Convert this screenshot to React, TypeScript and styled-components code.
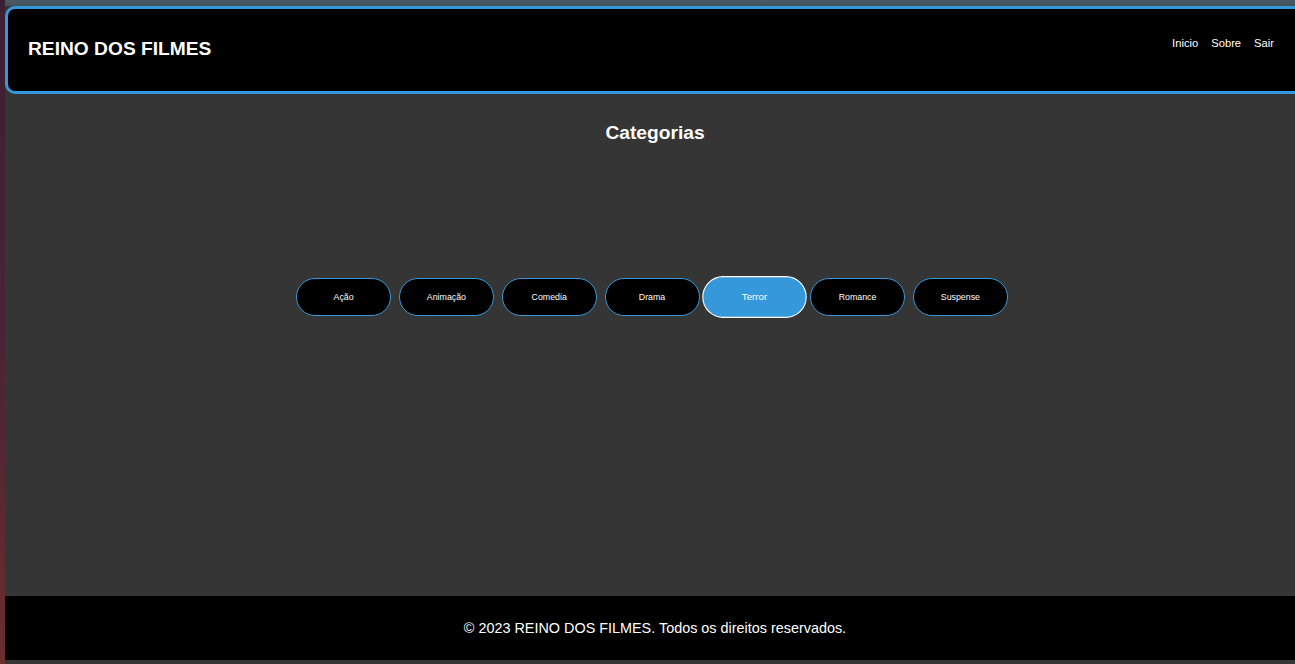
import React from "react";
import styled, { createGlobalStyle } from "styled-components";

const GlobalStyle = createGlobalStyle`
    html, body {
        margin: 0;
        padding: 0;
        height: 100%;
        overflow: hidden;
        background: #353535;
        font-family: "Liberation Sans", Arial, sans-serif;
    }
`;

const categorias = ["Ação", "Animação", "Comedia", "Drama", "Terror", "Romance", "Suspense"];
const ativa = "Terror";

export default function App() {
    return (
        <>
            <GlobalStyle />
            <Page>
                {/* faixa da esquerda */}
                <SideStrip />
                <Column>
                    <TopStrip />
                    <Header>
                        <Logo>REINO DOS FILMES</Logo>
                        <Nav>
                            <NavLink href="#">Inicio</NavLink>
                            <NavLink href="#">Sobre</NavLink>
                            <NavLink href="#">Sair</NavLink>
                        </Nav>
                    </Header>
                    <Main>
                        <Title>Categorias</Title>
                        <ButtonRow>
                            {categorias.map((c) => (
                                <CategoryButton key={c} active={c === ativa}>
                                    {c}
                                </CategoryButton>
                            ))}
                        </ButtonRow>
                    </Main>
                    <Footer>
                        <p>&copy; 2023 REINO DOS FILMES. Todos os direitos reservados.</p>
                    </Footer>
                </Column>
            </Page>
        </>
    );
}

const Page = styled.div`
    display: flex;
    height: 664px;
    width: 1305px;
`;

const SideStrip = styled.div`
    width: 5px;
    flex-shrink: 0;
    background: linear-gradient(#3d1f33, #4a2236 50%, #6a2e2e);
`;

const Column = styled.div`
    display: flex;
    flex-direction: column;
    width: 1300px;
    padding-bottom: 4px;
    box-sizing: border-box;
`;

const TopStrip = styled.div`
    height: 6px;
    flex-shrink: 0;
    background: linear-gradient(#4a5a63, #42525a);
`;

const Header = styled.header`
    display: flex;
    align-items: center;
    justify-content: space-between;
    height: 88px;
    box-sizing: border-box;
    padding: 0 20px;
    background: #000;
    border: 3px solid #3498db;
    border-radius: 10px;
    flex-shrink: 0;
`;

const Logo = styled.h1`
    margin: 0 0 3px;
    font-size: 19.2px;
    font-weight: bold;
    color: #fff;
`;

const Nav = styled.nav`
    display: flex;
    gap: 13px;
    margin-right: 8px;
    margin-bottom: 14px;
`;

const NavLink = styled.a`
    color: #fff;
    font-size: 11.2px;
    text-decoration: none;
`;

const Main = styled.main`
    flex: 1;
    display: flex;
    flex-direction: column;
    align-items: center;
`;

const Title = styled.h2`
    margin: 28px 0 0;
    font-size: 19.2px;
    line-height: 22px;
    font-weight: bold;
    color: #fff;
`;

const ButtonRow = styled.div`
    display: flex;
    gap: 7.8px;
    margin-top: 134px;
    padding-right: 6px;
`;

const CategoryButton = styled.button<{ active?: boolean }>`
    width: 95px;
    height: 38px;
    border-radius: 20px;
    border: 1px solid ${(p) => (p.active ? "#fff" : "#3498db")};
    background: ${(p) => (p.active ? "#3498db" : "#000")};
    color: #fff;
    font-family: "Liberation Sans", Arial, sans-serif;
    font-size: 8.8px;
    cursor: pointer;
    transform: ${(p) => (p.active ? "scale(1.1)" : "none")};
`;

const Footer = styled.footer`
    height: 64px;
    flex-shrink: 0;
    display: flex;
    align-items: center;
    justify-content: center;
    background: #000;
    color: #fff;
    font-size: 14.4px;

    p {
        margin: 0;
    }
`;
